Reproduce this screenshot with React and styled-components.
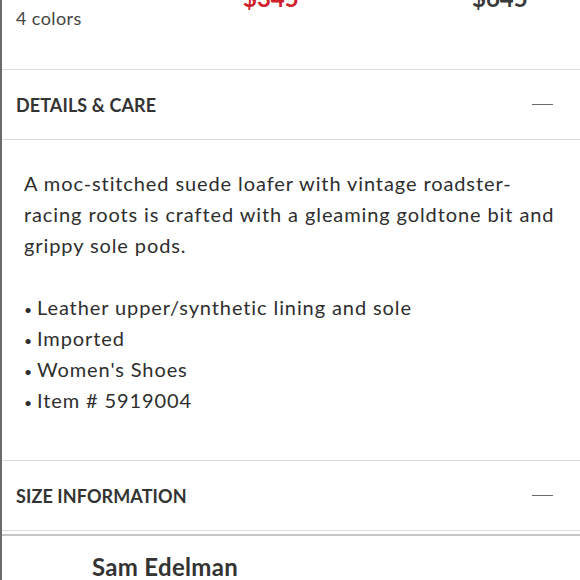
import React from 'react'
import styled, { createGlobalStyle } from 'styled-components'

const Global = createGlobalStyle`
  html, body { margin: 0; padding: 0; background: #fff; }
  body { font-family: Lato, "Open Sans", sans-serif; color: #333; }
`

const Page = styled.div`
  width: 580px;
  height: 580px;
  overflow: hidden;
  border-left: 2px solid #6b6b6b;
  box-sizing: border-box;
`

const Summary = styled.div`
  height: 70px;
  box-sizing: border-box;
  display: flex;
  flex-direction: column;
  padding: 0 14px;
  border-bottom: 1px solid #dcdcdc;
`

const PriceRow = styled.div`
  display: grid;
  grid-template-columns: 227px 229px 1fr;
  margin-top: -17px;
  height: 24px;
`

const Price = styled.span`
  font-size: 24px;
  font-weight: 700;
  line-height: 30px;
  color: ${p => (p.sale ? '#d0202a' : '#393939')};
`

const Colors = styled.div`
  font-size: 18px;
  line-height: 22px;
  letter-spacing: 0.4px;
  color: #444;
`

const Header = styled.div`
  height: 70px;
  box-sizing: border-box;
  display: flex;
  align-items: center;
  justify-content: space-between;
  padding: 0 27px 0 14px;
  border-bottom: 1px solid #dcdcdc;
`

const HeaderTitle = styled.h2`
  margin: 0;
  font-size: 18px;
  font-weight: 700;
  letter-spacing: 0.1px;
  color: #333;
`

const Minus = styled.span`
  display: block;
  width: 21px;
  height: 1.5px;
  background: #6a6a6a;
`

const Body = styled.div`
  padding: 28px 20px 44px 22px;
  border-bottom: 1px solid #dcdcdc;
  font-size: 20px;
  line-height: 31px;
  letter-spacing: 0.9px;
  color: #2e2e2e;
`

const Para = styled.p`
  margin: 0 0 31px;
`

const List = styled.ul`
  margin: 0;
  padding: 0;
  list-style: none;
`

const Item = styled.li`
  height: 31px;
  &::before {
    content: '•';
    display: inline-block;
    width: 13px;
    font-size: 14px;
    line-height: 1;
  }
`

const DoubleRule = styled.div`
  height: 3px;
  border-bottom: 2px solid #c6c6c6;
`

const Brand = styled.div`
  padding: 16px 0 0 90px;
  font-size: 24px;
  line-height: 29px;
  font-weight: 700;
  letter-spacing: 0.3px;
  color: #333;
`

const Section = ({ title }) => (
  <Header>
    <HeaderTitle>{title}</HeaderTitle>
    <Minus />
  </Header>
)

export default function App() {
  return (
    <Page>
      <Global />
      <Summary>
        <PriceRow>
          <span />
          <Price sale>$345</Price>
          <Price>$645</Price>
        </PriceRow>
        <Colors>4 colors</Colors>
      </Summary>
      <Section title="DETAILS & CARE" />
      <Body>
        <Para>
          A moc-stitched suede loafer with vintage roadster-racing roots is crafted with a gleaming goldtone bit and grippy sole pods.
        </Para>
        <List>
          <Item>Leather upper/synthetic lining and sole</Item>
          <Item>Imported</Item>
          <Item>Women's Shoes</Item>
          <Item>Item # 5919004</Item>
        </List>
      </Body>
      <Section title="SIZE INFORMATION" />
      <DoubleRule />
      <Brand>Sam Edelman</Brand>
    </Page>
  )
}
